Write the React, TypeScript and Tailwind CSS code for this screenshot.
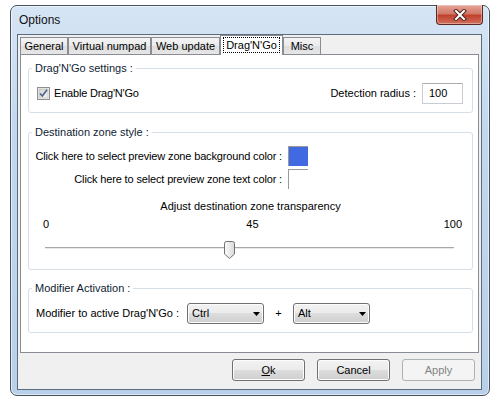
import React from 'react'

const tabs = [
  { label: 'General', cls: 'w-[48px]' },
  { label: 'Virtual numpad', cls: 'w-[83px]' },
  { label: 'Web update', cls: 'w-[69px]' },
  { label: "Drag'N'Go", cls: 'w-[63px]', active: true },
  { label: 'Misc', cls: 'w-[38px]' },
]

const btnBg =
  'bg-[linear-gradient(#f2f2f2_0%,#ebebeb_50%,#dddddd_50%,#cfcfcf_100%)] shadow-[inset_0_0_0_1px_#fcfcfc]'

function Combo({ value }: { value: string }) {
  return (
    <div className={`flex h-[21px] w-[77px] items-center justify-between rounded-[3px] border border-[#707070] pl-[4px] pr-[3px] ${btnBg}`}>
      <span>{value}</span>
      <svg width="7" height="4" viewBox="0 0 7 4">
        <path d="M0 0h7L3.5 4z" fill="#000" />
      </svg>
    </div>
  )
}

function Group({ title, className, children }: { title: string; className: string; children: React.ReactNode }) {
  return (
    <fieldset className={`ml-[7px] w-[445px] rounded-[3px] border border-[#d5dfe5] ${className}`}>
      <legend className="ml-[3px] px-[3px] leading-[15px] text-[#0f1d33]">{title}</legend>
      {children}
    </fieldset>
  )
}

function Slider({ value }: { value: number }) {
  return (
    <div className="relative ml-[2px] mr-[8px] h-[18px]">
      <div className="absolute left-0 right-0 top-[6px] h-[2px] border-t border-[#a7a7a7] bg-[#e7eaea]" />
      <svg
        className="absolute top-0"
        style={{ left: `calc(${value}% - 5px)` }}
        width="11"
        height="18"
        viewBox="0 0 11 18"
      >
        <defs>
          <linearGradient id="thumb" x1="0" y1="0" x2="1" y2="0">
            <stop offset="0" stopColor="#fbfbfb" />
            <stop offset="1" stopColor="#d9d9d9" />
          </linearGradient>
        </defs>
        <path d="M0.5 2.5Q0.5 0.5 2.5 0.5H8.5Q10.5 0.5 10.5 2.5V13L5.5 17.5L0.5 13Z" fill="url(#thumb)" stroke="#707070" />
      </svg>
    </div>
  )
}

export default function App() {
  const transparency = 45

  return (
    <div className="h-[400px] w-[500px] bg-white pl-[10px] pt-[5px] font-['Liberation_Sans',Arial,sans-serif] text-[11px] text-black">
      <div className="flex h-[391px] w-[480px] flex-col rounded-[7px] border border-[#47525e] bg-[linear-gradient(180deg,#d6e5f5_0%,#c3d8ef_30%,#b9d0ea_100%)] shadow-[inset_0_0_0_1px_rgba(255,255,255,0.55)]">
        {/* title bar */}
        <div className="flex h-[28px] items-start justify-between pl-[8px] pr-[6px]">
          <span className="pt-[7px] text-[12px] leading-[15px] text-[#111]">Options</span>
          <div className="-mt-px flex h-[20px] w-[47px] items-center justify-center rounded-b-[4px] border border-t-0 border-[#5a2a22] bg-[linear-gradient(#e6a597_0%,#d27a6a_45%,#c1402c_55%,#d0715c_100%)] shadow-[inset_0_0_0_1px_rgba(255,255,255,0.35)]">
            <svg width="14" height="12" viewBox="0 0 14 12">
              <path d="M3 2L11 10M11 2L3 10" stroke="#4a2420" strokeWidth="4" strokeLinecap="square" />
              <path d="M3 2L11 10M11 2L3 10" stroke="#fff" strokeWidth="2" strokeLinecap="square" />
            </svg>
          </div>
        </div>

        {/* client area */}
        <div className="ml-[6px] flex h-[356px] w-[465px] flex-col border border-[#5d6c7c] bg-[#f0f0f0]">
          <div className="px-[2px]">
            {/* tabs */}
            <div className="relative z-10 flex h-[19px] items-end">
              {tabs.map((t) =>
                t.active ? (
                  <div
                    key={t.label}
                    className={`${t.cls} -mb-px flex h-[20px] items-start justify-center border border-b-0 border-[#898c95] bg-white pt-[1px]`}
                  >
                    <span className="border border-dotted border-black px-[2px] leading-[14px]">{t.label}</span>
                  </div>
                ) : (
                  <div
                    key={t.label}
                    className={`${t.cls} flex h-[17px] items-center justify-center border border-b-0 border-[#898c95] bg-[linear-gradient(#f3f3f3_0%,#ebebeb_50%,#dedede_50%,#e6e6e6_100%)] leading-[14px]`}
                  >
                    {t.label}
                  </div>
                ),
              )}
            </div>

            {/* tab page */}
            <div className="flex h-[299px] w-[459px] flex-col border border-[#898c95] bg-white pt-[6px]">
              <Group title="Drag'N'Go settings :" className="h-[52px]">
                <div className="mt-[7px] flex h-[21px] items-center justify-between pl-[8px] pr-[9px]">
                  <div className="flex items-center gap-[4px]">
                    <svg width="13" height="13" viewBox="0 0 13 13">
                      <defs>
                        <linearGradient id="cb" x1="0" y1="0" x2="1" y2="1">
                          <stop offset="0" stopColor="#d2d2d2" />
                          <stop offset="1" stopColor="#f4f4f4" />
                        </linearGradient>
                      </defs>
                      <rect x="0.5" y="0.5" width="12" height="12" fill="#f4f4f4" stroke="#8f8f8f" />
                      <rect x="2" y="2" width="9" height="9" fill="url(#cb)" stroke="#b5b5b5" strokeWidth="0.6" />
                      <path d="M3 6.5L5.3 9L10 2.8" fill="none" stroke="#4e6488" strokeWidth="1.7" />
                    </svg>
                    <span className="tracking-[-0.2px]">Enable Drag'N'Go</span>
                  </div>
                  <div className="flex items-center gap-[6px]">
                    <span>Detection radius :</span>
                    <div className="flex h-[21px] w-[41px] items-center border border-[#c9ced4] border-t-[#abadb3] pl-[6px]">100</div>
                  </div>
                </div>
              </Group>

              <Group title="Destination zone style :" className="mt-[12px] h-[145px]">
                <div className="mt-[6px] flex w-[279px] flex-col items-end gap-[3px] whitespace-nowrap tracking-[-0.15px]">
                  <div className="flex h-[20px] items-center gap-[6px]">
                    <span>Click here to select preview zone background color :</span>
                    <div className="h-[20px] w-[20px] border-l border-t border-[#9a9a9a] bg-[#4169e1]" />
                  </div>
                  <div className="flex h-[20px] items-center gap-[6px]">
                    <span>Click here to select preview zone text color :</span>
                    <div className="h-[20px] w-[20px] border-l border-t border-[#9a9a9a] bg-white" />
                  </div>
                </div>
                <div className="mt-[10px] text-center leading-[15px]">Adjust destination zone transparency</div>
                <div className="pl-[14px] pr-[10px]">
                  <div className="mt-[3px] grid grid-cols-3 leading-[15px]">
                    <span className="text-left">0</span>
                    <span className="text-center">{transparency}</span>
                    <span className="text-right">100</span>
                  </div>
                  <div className="mt-[9px]">
                    <Slider value={transparency} />
                  </div>
                </div>
              </Group>

              <Group title="Modifier Activation :" className="mt-[11px] h-[52px]">
                <div className="mt-[7px] flex h-[21px] items-center pl-[7px]">
                  <span className="w-[151px]">Modifier to active Drag'N'Go :</span>
                  <Combo value="Ctrl" />
                  <span className="w-[29px] text-center">+</span>
                  <Combo value="Alt" />
                </div>
              </Group>
            </div>
          </div>

          {/* buttons */}
          <div className="flex justify-end gap-[12px] pr-[6px] pt-[6px]">
            <button className={`h-[22px] w-[73px] rounded-[3px] border border-[#707070] ${btnBg}`}>
              <span className="underline">O</span>k
            </button>
            <button className={`h-[22px] w-[73px] rounded-[3px] border border-[#707070] ${btnBg}`}>Cancel</button>
            <button className="h-[22px] w-[73px] rounded-[3px] border border-[#adb2b5] bg-[#f4f4f4] text-[#838383]">Apply</button>
          </div>
        </div>
      </div>
    </div>
  )
}
